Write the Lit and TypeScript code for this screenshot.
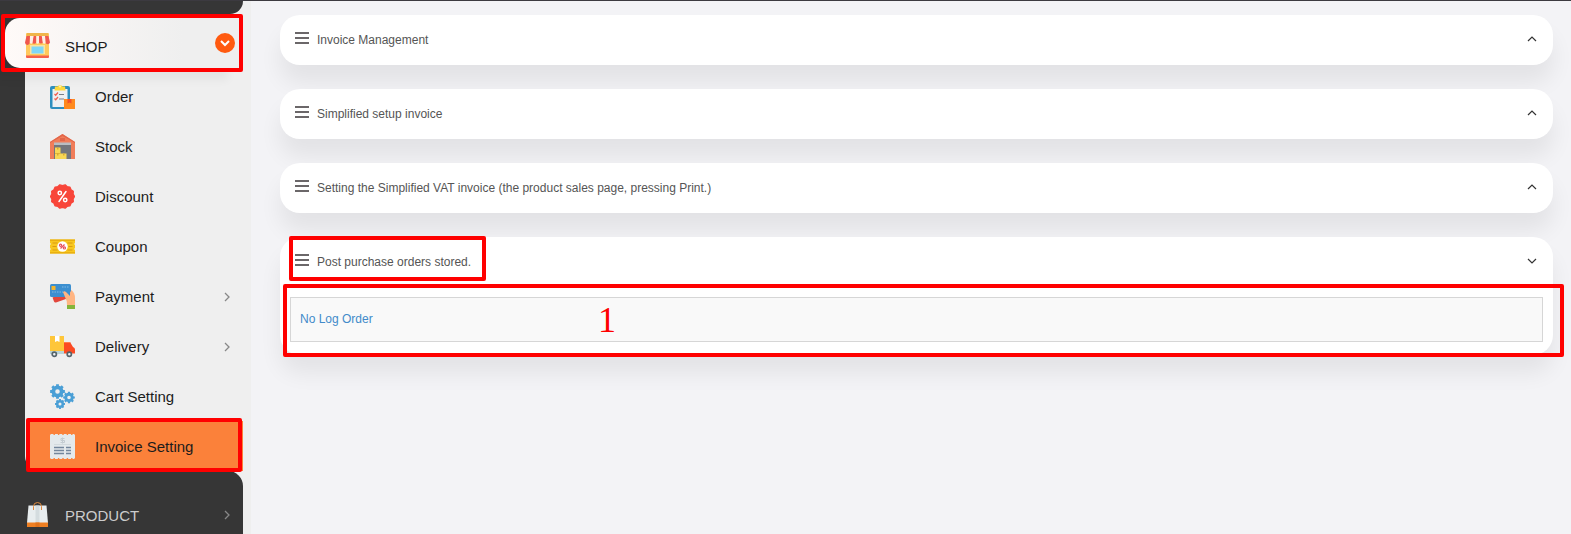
import { LitElement, html, svg, css, nothing, TemplateResult } from "lit";
import { customElement, state } from "lit/decorators.js";
import { classMap } from "lit/directives/class-map.js";

type Item = { label: string; icon: string; sub?: boolean; active?: boolean };

const items: Item[] = [
  { label: "Order", icon: "order" },
  { label: "Stock", icon: "stock" },
  { label: "Discount", icon: "discount" },
  { label: "Coupon", icon: "coupon" },
  { label: "Payment", icon: "payment", sub: true },
  { label: "Delivery", icon: "delivery", sub: true },
  { label: "Cart Setting", icon: "gears" },
  { label: "Invoice Setting", icon: "invoice", active: true },
];

const panels = [
  "Invoice Management",
  "Simplified setup invoice",
  "Setting the Simplified VAT invoice (the product sales page, pressing Print.)",
  "Post purchase orders stored.",
];

const gear = (x: number, y: number, r: number) => svg`
  <g transform="translate(${x} ${y})" fill="none" stroke="#4a9fd6">
    <circle r=${r * 0.62} stroke-width=${r * 0.56}></circle>
    ${[0, 45, 90, 135].map(
      (a) => svg`<path transform="rotate(${a})" stroke-width=${r * 0.42}
        d="M0 ${-r * 1.1}V${-r * 0.75}M0 ${r * 0.75}V${r * 1.1}"></path>`
    )}
  </g>`;

const scallop = (n: number, outer: number, inner: number) =>
  Array.from({ length: n * 2 }, (_, i) => {
    const a = (i * Math.PI) / n;
    const r = i % 2 ? inner : outer;
    return `${(12.5 + r * Math.cos(a)).toFixed(2)},${(12.5 + r * Math.sin(a)).toFixed(2)}`;
  }).join(" ");

const icons: Record<string, TemplateResult> = {
  shop: svg`
    <path fill="#ffc95c" d="M1 1q0-1 1-1h21q1 0 1 1v22H1z"></path>
    <path fill="#f5604a" d="M1 22.500h23V24q0 1-1 1H2q-1 0-1-1z"></path>
    <path fill="#fbe3a0" d="M5 12h15v9H5z"></path>
    <path fill="#7fd6f7" d="M6.500 13.500h12v7h-12z"></path>
    <path fill="#f0574e" d="M1.500 3H5L4.800 9.500a2.400 2.400 0 0 1-4.800 0zM8.500 3h2.800v6.500a2.400 2.400 0 0 1-4.300 0zM14 3h2.800L18 9.500a2.400 2.400 0 0 1-4 0zM20 3h3.500L25 9.500a2.400 2.400 0 0 1-4.600 0z"></path>
    <path fill="#fdeee8" d="M5 3h3.500L7.600 9.800a1.500 1.500 0 0 1-2.800 0zM11.300 3H14v6.800a1.400 1.400 0 0 1-2.700 0zM16.800 3H20l.5 6.800a1.500 1.500 0 0 1-2.700 0z"></path>
    <path fill="#f0b54a" d="M2 0h21l.5 3h-22z"></path>`,
  order: svg`
    <rect x="0" y="2" width="20" height="23" rx="2" fill="#2d8fbf"></rect>
    <path fill="#eef0f2" d="M2.500 5h15v18h-15z"></path>
    <path fill="#ffd93d" d="M5 2.500h2.500a2.800 2.500 0 0 1 5 0H15l.5 4h-11z"></path>
    <circle cx="10" cy="2.400" r="1" fill="#fff3b0"></circle>
    <path fill="none" stroke="#f2604f" stroke-width="1.300" d="M4.500 10l1.200 1.200L8 8.500M4.500 14.500l1.200 1.200L8 13"></path>
    <path stroke="#777f88" stroke-width="1.200" d="M9 10.500h5M9 15h5"></path>
    <path fill="#ff8a1e" d="M14 15h11v10H14z"></path>
    <path fill="#f2502a" d="M17.500 15h4v4.500l-2-1-2 1z"></path>`,
  stock: svg`
    <path fill="#f07d5a" d="M0 8L12.500 0 25 8v17H0z"></path>
    <path fill="#e2664a" d="M0 8L12.500 0 25 8v1L12.500 2 0 9zM10 4h5v3h-5z"></path>
    <path fill="#74767c" d="M4 9h17v16H4z"></path>
    <path fill="#b9bdc2" d="M4 8.500h17V11H4z"></path>
    <path fill="#f8d755" d="M5 13.500h5.500V25H5zM10.500 19.500h6V25h-6z"></path>
    <path fill="#d9ab35" d="M7 13.500h1.500v2H7zM7 19.500h1.500v2H7zM13 19.500h1.500v2H13zM5 19h5.500v.7H5z"></path>`,
  discount: svg`
    <polygon fill="#f8463a" stroke="#f8463a" stroke-width="1.500" stroke-linejoin="round" points=${scallop(14, 11.9, 10.8)}></polygon>
    <g fill="none" stroke="#fff" stroke-width="1.500">
      <circle cx="9.800" cy="9" r="1.700"></circle><circle cx="15.200" cy="16" r="1.700"></circle>
      <path stroke-linecap="round" d="M16 7.500L9 17.500"></path>
    </g>`,
  coupon: svg`
    <path fill="#f8c71f" d="M0 5.500h25V9l-1 1 1 1v3l-1 1 1 1v3.500H0V16l1-1-1-1v-3l1-1-1-1z"></path>
    <path fill="#eab010" d="M0 5.500h25V7H0zM0 18h25v1.500H0z"></path>
    <path stroke="#d99a14" stroke-width="1" d="M2.500 9h5M2.500 12.500h4M2.500 16h5M17.500 9h5M18.500 12.500h4M17.500 16h5"></path>
    <circle cx="12.500" cy="12.500" r="5.200" fill="#fff"></circle>
    <g fill="none" stroke="#e8525e" stroke-width="1.200">
      <circle cx="10.600" cy="11.200" r="1.100"></circle><circle cx="14.400" cy="13.900" r="1.100"></circle>
      <path d="M10.500 14.500l4-4"></path>
    </g>`,
  payment: svg`
    <path fill="#e2473c" d="M2.500 13.500L20 6.500l3 6-17 6q-1.500.3-2-1z"></path>
    <rect x="0" y="0" width="21" height="13" rx="1.500" fill="#3c8fd0"></rect>
    <rect x="1.500" y="2" width="4" height="4" rx=".6" fill="#f5b62e"></rect>
    <path stroke="#8fc4ea" stroke-width=".8" stroke-dasharray="1.500 1" d="M2 8h11M12 3h7"></path>
    <path fill="#ffb583" d="M13 8q1.500-1.300 3 0l4 4V8.500L21.500 6q3.500 3 3.500 8v7h-8q0-5-2-8z"></path>
    <path fill="#84b53b" d="M17 21h8v4h-8z"></path>`,
  delivery: svg`
    <path fill="#fec63a" d="M0 2h14v15H0z"></path>
    <path fill="#fff" d="M5 2h4.500v6L7.200 7 5 8z"></path>
    <path fill="#fb4a23" d="M14 8h6l3 5q2 .5 2 2.500v4H14z"></path>
    <path fill="#ff7a4d" d="M14 8h6l.6 1H14z"></path>
    <path fill="#b9d3d8" d="M0 17h14v3H0z"></path>
    <g fill="#eef2f4" stroke="#56646b" stroke-width="1.700">
      <circle cx="4.300" cy="20.200" r="2.100"></circle><circle cx="19.300" cy="20.200" r="2.100"></circle>
    </g>`,
  gears: svg`${gear(7.5, 7.5, 6.7)}${gear(19, 13.5, 5.3)}${gear(10, 20, 4.5)}`,
  invoice: svg`
    <rect y="1" width="25" height="23" fill="#e4e9ec"></rect>
    <path stroke="#e4e9ec" stroke-width="2" stroke-dasharray="3 1.400" d="M.5 1h24M.5 24h24"></path>
    <path fill="none" stroke="#c3cbd1" d="M14.500 4.500h-3.500v2h3.500v2H10.500M12.500 3.500v6"></path>
    <path stroke="#d3dade" d="M4 10.500h17"></path>
    <path stroke="#73869c" stroke-width="1.400" d="M4 13.500h10M16 13.500h5M4 16.500h10M16 16.500h5M4 19.500h10M16 19.500h5"></path>`,
  product: svg`
    <path fill="#e8edef" d="M3.500 3.500h18l1.500 17.500H2z"></path>
    <path fill="#d4dcdf" d="M10.500 3.500h4V21h-4z"></path>
    <path fill="#ee7f22" d="M2 20.500h21V25H2z"></path>
    <path fill="#e0721a" d="M10.500 20.500h4V25h-4z"></path>
    <path fill="none" stroke="#e08a3c" stroke-width="1" d="M8.500 8V4.500a4 4 0 0 1 8 0V8"></path>`,
};

const angle = (d: string, cls: string) =>
  html`<svg class=${cls} viewBox="0 0 10 10" aria-hidden="true"><path d=${d}></path></svg>`;

const RIGHT = "M3 1L7 5L3 9";
const UP = "M1 7L5 3L9 7";
const DOWN = "M1 3L5 7L9 3";

@customElement("menu-icon")
export class MenuIcon extends LitElement {
  static properties = { name: {} };
  static styles = css`
    :host { display: block; }
    .icon { display: block; width: 100%; height: 100%; }
  `;
  declare name: string;

  render() {
    return html`<svg class="icon" viewBox="0 0 25 25" aria-hidden="true">${icons[this.name]}</svg>`;
  }
}

@customElement("side-menu")
export class SideMenu extends LitElement {
  static styles = css`
    :host {
      display: block;
      background: #efefef;
      font: 15px/20px "Liberation Sans", Arial, sans-serif;
    }
    a { color: #1c1c1c; text-decoration: none; }
    ul { list-style: none; margin: 0; padding: 0; }
    .dark { background: #363636; margin-right: 8px; }
    .cap { height: 13px; border-bottom-right-radius: 15px; }
    .group { background: linear-gradient(90deg, #363636 25px, #efefef 25px); padding: 4px 8px 3px 5px; }
    .head {
      display: flex;
      align-items: center;
      height: 50px;
      box-sizing: border-box;
      padding: 5px 8px 0 20px;
      position: relative;
    }
    .shop {
      border-radius: 15px 0 0 15px;
      background: linear-gradient(90deg, #fffaf8, #efefef 75%);
      box-shadow: -15px 12px 10px rgba(0, 0, 0, 0.05);
    }
    .head span { flex: 1; padding-top: 2px; }
    .icon { width: 25px; height: 25px; margin-right: 15px; flex: none; }
    .badge { width: 20px; height: 20px; border-radius: 50%; background: #ff5a10; display: grid; place-items: center; margin-bottom: 5px; }
    .badge svg { width: 10px; height: 10px; }
    .badge path { stroke: #fff; stroke-width: 2; }
    path { fill: none; }
    .angle { width: 10px; height: 10px; flex: none; }
    .angle path { stroke: #888; stroke-width: 1.3; }
    .rail { background: #363636; padding-left: 25px; }
    .sub { background: #efefef; border-bottom-left-radius: 15px; }
    .sub a {
      display: flex;
      align-items: center;
      height: 50px;
      box-sizing: border-box;
      padding: 1px 11px 0 24px;
      margin: 0 8px 0 1px;
      position: relative;
    }
    .sub .icon { margin-right: 20px; }
    .sub span { flex: 1; }
    .sub .active { background: #fb813a; border-bottom-left-radius: 12px; }
    .mark { position: absolute; border: 4px solid #f00; border-radius: 2px; pointer-events: none; }
    .mark-shop { inset: -4px 0 -4px -4px; }
    .mark-active { inset: -3px 1px -1px 0; }
    .last { border-top-right-radius: 15px; padding: 17px 0 0 5px; }
    .last .head { padding: 3px 11px 0 20px; }
    .last span { color: #ccc; }
  `;

  render() {
    return html`
      <nav aria-label="Shop menu">
        <div class="dark cap"></div>
        <div class="group">
          <a class="head shop" href="#shop">
            ${this.art("shop")}<span>SHOP</span>
            <b class="badge">${angle(DOWN, "")}</b>
            <i class="mark mark-shop"></i>
          </a>
        </div>
        <div class="rail">
          <ul class="sub">
            ${items.map(
              (it) => html`<li>
                <a href="#${it.icon}" class=${classMap({ active: !!it.active })}>
                  ${this.art(it.icon)}<span>${it.label}</span>
                  ${it.sub ? angle(RIGHT, "angle") : nothing}
                  ${it.active ? html`<i class="mark mark-active"></i>` : nothing}
                </a>
              </li>`
            )}
          </ul>
        </div>
        <div class="dark last">
          <a class="head" href="#product">
            ${this.art("product")}<span>PRODUCT</span>${angle(RIGHT, "angle")}
          </a>
        </div>
      </nav>
    `;
  }

  private art(name: string) {
    return html`<menu-icon class="icon" name=${name}></menu-icon>`;
  }
}

@customElement("app-root")
export class AppRoot extends LitElement {
  static styles = css`
    :host {
      display: grid;
      grid-template-columns: 251px minmax(0, 1fr);
      height: 100vh;
      box-sizing: border-box;
      overflow: hidden;
      border-top: 1px solid #3c3a40;
      background: #f3f3f6;
      font: 12px/16px "Liberation Sans", Arial, sans-serif;
    }
    main { padding: 14px 18px 0 29px; display: flex; flex-direction: column; gap: 24px; }
    .card {
      position: relative;
      background: #fff;
      border-radius: 20px;
      box-shadow: 0 18px 22px rgba(0, 0, 0, 0.065);
    }
    h2 { margin: 0; font: inherit; }
    button {
      display: flex;
      align-items: center;
      width: 100%;
      height: 50px;
      padding: 0 16px 0 15px;
      border: 0;
      background: none;
      font: inherit;
      color: #555;
      text-align: left;
      cursor: pointer;
    }
    .label { flex: 1; }
    .bars { width: 14px; height: 12px; margin: 0 8px 4px 0; }
    .bars path { stroke: #6b6769; stroke-width: 2; }
    .angle { width: 10px; height: 10px; margin-bottom: 2px; }
    .angle path { fill: none; stroke: #333; stroke-width: 1.2; }
    .body { padding: 10px 10px 13px; }
    .log { border: 1px solid #d6d6d6; background: #f9f9f9; padding: 13px 9px 14px; }
    .log a { color: #428bca; text-decoration: none; }
    .mark { position: absolute; border: 4px solid #f00; border-radius: 2px; pointer-events: none; }
    .mark-title { left: 9px; top: -1px; width: 189px; height: 37px; }
    .mark-body { inset: 47px -11px -2px 3px; }
    .number { position: absolute; left: 311px; top: 14px; color: #f00; font: 36px/36px "Liberation Serif", "Times New Roman", serif; }
  `;

  @state() private open = new Set([3]);

  private toggle(i: number) {
    const next = new Set(this.open);
    next.has(i) ? next.delete(i) : next.add(i);
    this.open = next;
  }

  render() {
    return html`
      <side-menu></side-menu>
      <main>
        ${panels.map((title, i) => {
          const open = this.open.has(i);
          return html`<section class="card">
            <h2>
              <button type="button" aria-expanded=${open ? "true" : "false"} @click=${() => this.toggle(i)}>
                <svg class="bars" viewBox="0 0 14 12" aria-hidden="true"><path d="M0 1h14M0 6h14M0 11h14"></path></svg>
                <span class="label">${title}</span>
                ${angle(open ? DOWN : UP, "angle")}
              </button>
            </h2>
            ${open && i === 3
              ? html`<div class="body"><div class="log"><a href="#log">No Log Order</a></div></div>
                  <i class="mark mark-title"></i>
                  <div class="mark mark-body"><span class="number">1</span></div>`
              : nothing}
          </section>`;
        })}
      </main>
    `;
  }
}
